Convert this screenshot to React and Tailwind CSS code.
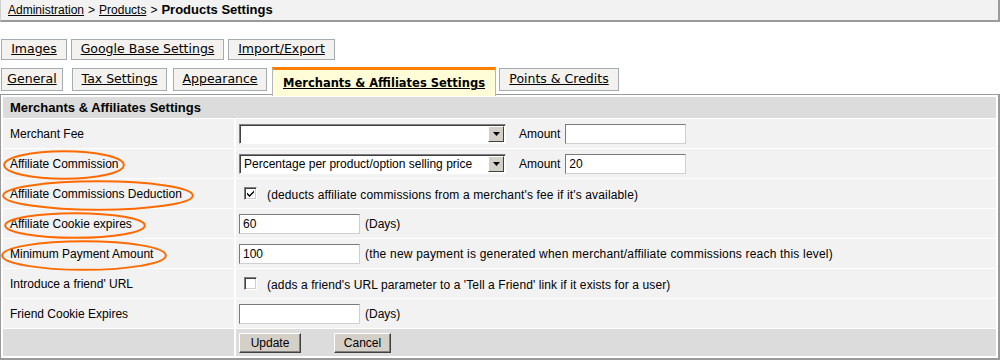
import React from 'react';

const tabRowOne = [
  { label: 'Images', cls: 'ml-[1px] w-[66px]' },
  { label: 'Google Base Settings', cls: 'ml-[4px] w-[153px]' },
  { label: 'Import/Export', cls: 'ml-[4px] w-[107px]' },
];

const Tab = ({ label, cls }) => (
  <div
    className={`flex h-[21px] items-center justify-center border border-[#a3acb3] bg-[#f4f2ee] font-['DejaVu_Sans',Verdana,sans-serif] text-[12.5px] underline ${cls}`}
  >
    {label}
  </div>
);

const SelectBox = ({ value }) => (
  <div className="flex h-[20px] w-[267px] items-stretch border border-[#808080] border-b-white border-r-white shadow-[inset_1px_1px_0_#404040] bg-white">
    <span className="flex-1 truncate pl-[4px] pt-[1px] leading-[17px]">{value}</span>
    <span className="my-[1px] mr-[1px] flex w-[16px] items-center justify-center border border-t-white border-l-white border-r-[#404040] border-b-[#404040] bg-[#d4d0c8]">
      <svg width="7" height="4" viewBox="0 0 7 4">
        <path d="M0 0h7L3.5 4z" fill="#000" />
      </svg>
    </span>
  </div>
);

const TextBox = ({ value, width = 'w-[121px]' }) => (
  <div
    className={`h-[20px] ${width} border border-[#7a7a7a] border-b-[#d0d0d0] border-r-[#d0d0d0] bg-white pl-[3px] leading-[18px]`}
  >
    {value}
  </div>
);

const CheckBox = ({ checked }) => (
  <span className="ml-[5px] flex h-[13px] w-[13px] items-center justify-center border border-[#808080] border-b-white border-r-white shadow-[inset_1px_1px_0_#404040,inset_-1px_-1px_0_#d4d0c8] bg-white">
    {checked && (
      <svg width="7" height="7" viewBox="0 0 7 7">
        <path d="M0 2.5l2.5 2.5L7 0.5v2L2.5 7 0 4.5z" fill="#000" />
      </svg>
    )}
  </span>
);

const Ring = ({ cls, w, h }) => (
  <svg className={`pointer-events-none absolute z-10 ${cls}`} width={w} height={h} viewBox={`0 0 ${w} ${h}`}>
    <ellipse cx={w / 2} cy={h / 2} rx={w / 2 - 1.2} ry={h / 2 - 1.2} fill="none" stroke="#ff6a00" strokeWidth="2" />
  </svg>
);

const rows = [
  {
    label: 'Merchant Fee',
    field: (
      <>
        <SelectBox value="" />
        <span className="ml-[13px] mr-[5px]">Amount</span>
        <TextBox value="" />
      </>
    ),
  },
  {
    label: 'Affiliate Commission',
    ring: <Ring cls="left-[0px] top-[1px]" w={122} h={30} />,
    field: (
      <>
        <SelectBox value="Percentage per product/option selling price" />
        <span className="ml-[13px] mr-[5px]">Amount</span>
        <TextBox value="20" />
      </>
    ),
  },
  {
    label: 'Affiliate Commissions Deduction',
    ring: <Ring cls="left-[-1px] top-[1px]" w={192} h={31} />,
    field: (
      <>
        <CheckBox checked />
        <span className="ml-[10px] mt-[3px] tracking-[0.15px]">(deducts affiliate commissions from a merchant's fee if it's available)</span>
      </>
    ),
  },
  {
    label: 'Affiliate Cookie expires',
    ring: <Ring cls="left-[1px] top-[3px]" w={142} h={27} />,
    field: (
      <>
        <TextBox value="60" />
        <span className="ml-[5px]">(Days)</span>
      </>
    ),
  },
  {
    label: 'Minimum Payment Amount',
    ring: <Ring cls="left-[-2px] top-[1px]" w={166} h={31} />,
    field: (
      <>
        <TextBox value="100" />
        <span className="ml-[5px] tracking-[0.2px]">(the new payment is generated when merchant/affiliate commissions reach this level)</span>
      </>
    ),
  },
  {
    label: "Introduce a friend' URL",
    field: (
      <>
        <CheckBox />
        <span className="ml-[10px] mt-[3px] tracking-[0.1px]">(adds a friend's URL parameter to a 'Tell a Friend' link if it exists for a user)</span>
      </>
    ),
  },
  {
    label: 'Friend Cookie Expires',
    field: (
      <>
        <TextBox value="" />
        <span className="ml-[5px]">(Days)</span>
      </>
    ),
  },
];

const Button = ({ children, cls }) => (
  <div
    className={`flex h-[20px] items-center justify-center border border-t-white border-l-white border-r-[#404040] border-b-[#404040] shadow-[inset_-1px_-1px_0_#808080] bg-[#d4d0c8] ${cls}`}
  >
    {children}
  </div>
);

export default function App() {
  return (
    <div className="h-[360px] w-[1000px] overflow-hidden bg-white font-['Liberation_Sans',Arial,sans-serif] text-[12px] text-black">
      <div className="flex h-[22px] w-[1000px] items-center border-b-2 border-l border-r-2 border-b-[#9a9a9a] border-l-[#cfcfcf] border-r-[#9a9a9a] bg-[#f2f2f2] pl-[7px]">
        <span className="underline">Administration</span>
        <span className="mx-[4px]">&gt;</span>
        <span className="underline">Products</span>
        <span className="mx-[4px]">&gt;</span>
        <span className="text-[13px] font-bold">Products Settings</span>
      </div>

      <div className="mt-[17px] flex">
        {tabRowOne.map((tab) => (
          <Tab key={tab.label} {...tab} />
        ))}
      </div>

      <div className="mt-[7px] flex h-[27px] items-start">
        <Tab label="General" cls="ml-[1px] mt-[1px] h-[23px] w-[62px]" />
        <Tab label="Tax Settings" cls="ml-[9px] mt-[1px] h-[23px] w-[95px]" />
        <Tab label="Appearance" cls="ml-[6px] mt-[1px] h-[23px] w-[94px]" />
        <div className="relative z-20 ml-[5px] flex h-[29px] w-[224px] items-center justify-center border-l border-r border-t-[3px] border-l-[#b5b5b5] border-r-[#b5b5b5] border-t-[#ff8000] bg-[#fffdd8] pt-[2px] font-['DejaVu_Sans',Verdana,sans-serif] text-[11.5px] font-bold underline">
          Merchants &amp; Affiliates Settings
        </div>
        <Tab label="Points & Credits" cls="ml-[3px] mt-[1px] h-[23px] w-[120px]" />
      </div>

      <div className="relative z-10 w-[1000px] border-b-2 border-l border-r-2 border-t border-[#9a9a9a] bg-white p-[2px]">
        <div className="flex h-[21px] items-center bg-[#dcdcdc] pl-[7px] text-[13px] font-bold">
          Merchants &amp; Affiliates Settings
        </div>
        <div className="mt-px flex flex-col gap-px">
          {rows.map((row) => (
            <div key={row.label} className="grid h-[29px] grid-cols-[231px_1fr] gap-x-[2px]">
              <div className="relative flex items-center bg-[#f2f2f2] pl-[7px]">
                {row.label}
                {row.ring}
              </div>
              <div className="flex items-center bg-[#f2f2f2] pl-[3px]">{row.field}</div>
            </div>
          ))}
          <div className="grid h-[27px] grid-cols-[231px_1fr] gap-x-[2px]">
            <div className="bg-[#dcdcdc]" />
            <div className="flex items-center bg-[#dcdcdc] pl-[3px]">
              <Button cls="w-[62px]">Update</Button>
              <Button cls="ml-[33px] w-[57px]">Cancel</Button>
            </div>
          </div>
        </div>
      </div>
    </div>
  );
}
